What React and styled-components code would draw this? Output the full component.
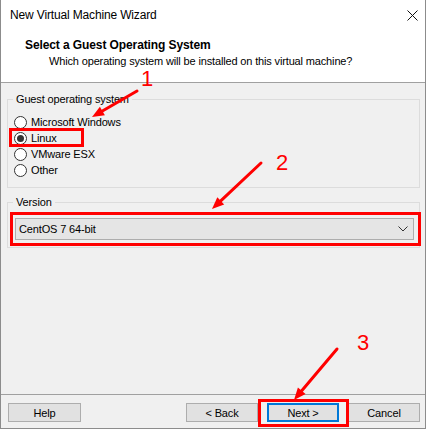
import React from "react";
import styled, { createGlobalStyle } from "styled-components";

const GlobalStyle = createGlobalStyle`
  html, body { margin: 0; padding: 0; background: #fff; }
  body {
    font-family: "Liberation Sans", Arial, sans-serif;
    font-size: 11px;
    letter-spacing: -0.15px;
    color: #000;
  }
`;

const Page = styled.div`
  position: relative;
  width: 429px;
  height: 431px;
  overflow: hidden;
`;

const Window = styled.div`
  width: 426px;
  height: 429px;
  box-sizing: border-box;
  border: 1px solid #8c8c8c;
  border-top: none;
  display: flex;
  flex-direction: column;
  background: #f0f0f0;
`;

const TitleBar = styled.div`
  height: 30px;
  flex: none;
  background: #fff;
  display: flex;
  align-items: center;
  justify-content: space-between;
  padding: 0 7px 0 9px;
  font-size: 12px;
`;

const Header = styled.div`
  height: 53px;
  flex: none;
  box-sizing: border-box;
  background: #fff;
  border-bottom: 1px solid #a0a0a0;
  padding: 8px 0 0 24px;
`;

const HeaderTitle = styled.div`
  font-size: 12px;
  font-weight: bold;
  letter-spacing: -0.1px;
  line-height: 14px;
`;

const HeaderSub = styled.div`
  line-height: 14px;
  margin-top: 2px;
  padding-left: 24px;
`;

const Body = styled.div`
  flex: 1;
  display: flex;
  flex-direction: column;
  gap: 7px;
  padding: 9px 5px 0 6px;
`;

const Group = styled.fieldset`
  margin: 0;
  padding: 0 5px ${(p) => p.$bottom}px 0;
  min-width: 0;
  border: 1px solid #dcdcdc;
`;

const Legend = styled.legend`
  margin-left: 5px;
  padding: 0 3px;
  line-height: 14px;
`;

const RadioList = styled.div`
  padding: 8px 0 0 6px;
  display: flex;
  flex-direction: column;
`;

const RadioRow = styled.label`
  height: 16px;
  display: flex;
  align-items: center;
  gap: 4px;
`;

const RadioDot = styled.span`
  width: 13px;
  height: 13px;
  box-sizing: border-box;
  border: 1px solid #333;
  border-radius: 50%;
  background: #fff;
  display: flex;
  align-items: center;
  justify-content: center;
  &::after {
    content: "";
    width: 7px;
    height: 7px;
    border-radius: 50%;
    background: ${(p) => (p.$checked ? "#333" : "transparent")};
  }
`;

const SelectWrap = styled.div`
  padding: 9px 0 0 7px;
`;

const SelectBox = styled.div`
  height: 22px;
  box-sizing: border-box;
  border: 1px solid #adadad;
  background: #e5e5e5;
  display: flex;
  align-items: center;
  justify-content: space-between;
  padding: 0 5px 0 3px;
`;

const Footer = styled.div`
  height: 34px;
  flex: none;
  box-sizing: border-box;
  border-top: 1px solid #a0a0a0;
  display: flex;
  align-items: flex-start;
  gap: 9px;
  padding: 8px 5px 0 7px;
`;

const Button = styled.div`
  width: ${(p) => p.$w || 72}px;
  height: 19px;
  box-sizing: border-box;
  border: ${(p) => (p.$default ? "2px solid #0078d7" : "1px solid #adadad")};
  background: #e1e1e1;
  display: flex;
  align-items: center;
  justify-content: center;
  margin-right: ${(p) => (p.$push ? "auto" : "0")};
`;

const Overlay = styled.svg`
  position: absolute;
  left: 0;
  top: 0;
  pointer-events: none;
`;

const Mark = styled.div`
  position: absolute;
  left: ${(p) => p.$x}px;
  top: ${(p) => p.$y}px;
  width: ${(p) => p.$w}px;
  height: ${(p) => p.$h}px;
  box-sizing: border-box;
  border: 3px solid #ff0000;
  pointer-events: none;
`;

const Step = styled.span`
  position: absolute;
  left: ${(p) => p.$x}px;
  top: ${(p) => p.$y}px;
  font-size: 22px;
  line-height: 22px;
  letter-spacing: 0;
  color: #ff0000;
`;

const Arrow = ({ from, to }) => {
  const dx = to[0] - from[0];
  const dy = to[1] - from[1];
  const len = Math.hypot(dx, dy);
  const ux = dx / len;
  const uy = dy / len;
  const bx = to[0] - ux * 12;
  const by = to[1] - uy * 12;
  const pts = [
    [to[0], to[1]],
    [bx - uy * 5, by + ux * 5],
    [bx + uy * 5, by - ux * 5],
  ]
    .map((p) => p.join(","))
    .join(" ");
  return (
    <g>
      <line x1={from[0]} y1={from[1]} x2={bx} y2={by} stroke="#ff0000" strokeWidth="3" strokeLinecap="round" />
      <polygon points={pts} fill="#ff0000" />
    </g>
  );
};

const systems = [
  { name: "Microsoft Windows" },
  { name: "Linux", checked: true },
  { name: "VMware ESX" },
  { name: "Other" },
];

const App = () => {
  return (
    <Page>
      <GlobalStyle />
      <Window>
        <TitleBar>
          <span>New Virtual Machine Wizard</span>
          <svg width="11" height="11" viewBox="0 0 11 11">
            <path d="M0.5 0.5 L10.5 10.5 M10.5 0.5 L0.5 10.5" stroke="#111" strokeWidth="1" />
          </svg>
        </TitleBar>
        <Header>
          <HeaderTitle>Select a Guest Operating System</HeaderTitle>
          <HeaderSub>Which operating system will be installed on this virtual machine?</HeaderSub>
        </Header>
        <Body>
          <Group $bottom={9}>
            <Legend>Guest operating system</Legend>
            <RadioList>
              {systems.map((s) => (
                <RadioRow key={s.name}>
                  <RadioDot $checked={s.checked} />
                  {s.name}
                </RadioRow>
              ))}
            </RadioList>
          </Group>
          <Group $bottom={7}>
            <Legend>Version</Legend>
            <SelectWrap>
              <SelectBox>
                <span>CentOS 7 64-bit</span>
                <svg width="10" height="6" viewBox="0 0 10 6">
                  <path d="M0.5 0.5 L5 5 L9.5 0.5" fill="none" stroke="#333" strokeWidth="1" />
                </svg>
              </SelectBox>
            </SelectWrap>
          </Group>
        </Body>
        <Footer>
          <Button $w={73} $push>Help</Button>
          <Button>&lt; Back</Button>
          <Button $default>Next &gt;</Button>
          <Button>Cancel</Button>
        </Footer>
      </Window>

      <Mark $x={9} $y={128} $w={75} $h={19} />
      <Mark $x={10} $y={212} $w={411} $h={34} />
      <Mark $x={258} $y={399} $w={91} $h={28} />

      <Overlay width="429" height="431">
        <Arrow from={[137, 91]} to={[92, 117]} />
        <Arrow from={[261, 163]} to={[212, 209]} />
        <Arrow from={[337, 349]} to={[294, 400]} />
      </Overlay>

      <Step $x={141} $y={68}>1</Step>
      <Step $x={276} $y={152}>2</Step>
      <Step $x={357} $y={332}>3</Step>
    </Page>
  );
};

export default App;
